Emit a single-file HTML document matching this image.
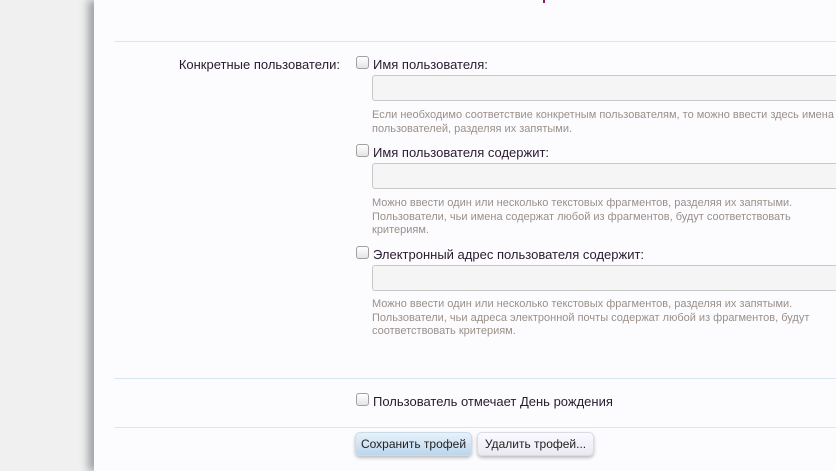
<!DOCTYPE html>
<html><head><meta charset="utf-8"><style>
body{margin:0;width:836px;height:471px;overflow:hidden;background:#f0f0f0;font-family:"Liberation Sans",sans-serif;position:relative}
#panel{position:absolute;left:94px;top:0;width:742px;height:471px;background:#fcfcff;box-shadow:-6px 0 8px rgba(60,70,80,.45)}
.a{position:absolute;white-space:nowrap}
.hr{position:absolute;left:114px;width:722px;height:1px;background:#d8e6f0}
.lbl{font-size:13px;color:#2a1a30}
.cb{position:absolute;width:11px;height:11px;border:1px solid #a0a0a0;border-radius:3px;background:linear-gradient(#fff,#e4e4e4)}
.ta{position:absolute;left:372px;width:464px;height:26px;border:1px solid #c8c8c8;border-right:none;border-radius:3px 0 0 3px;background:#f5f5f5;box-sizing:border-box}
.hint{position:absolute;left:372px;font-size:11px;line-height:13.5px;color:#9a8f88;white-space:nowrap}
.btn{position:absolute;top:432px;height:24px;border-radius:5px;font-size:12px;color:#222;line-height:22px;text-align:center;box-sizing:border-box;white-space:nowrap;box-shadow:0 2px 3px rgba(0,0,0,.25)}
</style></head><body>
<div id="panel"></div>
<div class="a" style="left:543px;top:0;width:2px;height:3px;background:#802060"></div>
<div class="hr" style="top:41px"></div>
<div class="a lbl" style="right:496px;top:57px">Конкретные пользователи:</div>
<div class="cb" style="left:356px;top:56px"></div>
<div class="a lbl" style="left:373px;top:57px">Имя пользователя:</div>
<div class="ta" style="top:75px"></div>
<div class="hint" style="top:109px">Если необходимо соответствие конкретным пользователям, то можно ввести здесь имена<br>пользователей, разделяя их запятыми.</div>
<div class="cb" style="left:356px;top:144px"></div>
<div class="a lbl" style="left:373px;top:145px">Имя пользователя содержит:</div>
<div class="ta" style="top:163px"></div>
<div class="hint" style="top:197px">Можно ввести один или несколько текстовых фрагментов, разделяя их запятыми.<br>Пользователи, чьи имена содержат любой из фрагментов, будут соответствовать<br>критериям.</div>
<div class="cb" style="left:356px;top:246px"></div>
<div class="a lbl" style="left:373px;top:247px">Электронный адрес пользователя содержит:</div>
<div class="ta" style="top:265px"></div>
<div class="hint" style="top:298px">Можно ввести один или несколько текстовых фрагментов, разделяя их запятыми.<br>Пользователи, чьи адреса электронной почты содержат любой из фрагментов, будут<br>соответствовать критериям.</div>
<div class="hr" style="top:378px"></div>
<div class="cb" style="left:356px;top:393px"></div>
<div class="a lbl" style="left:373px;top:394px">Пользователь отмечает День рождения</div>
<div class="hr" style="top:427px"></div>
<div class="btn" style="left:355px;width:117px;background:linear-gradient(#e8f2fa,#bcd6ec);border:1px solid #c8dcec">Сохранить трофей</div>
<div class="btn" style="left:477px;width:117px;background:linear-gradient(#fafaff,#ebe8f2);border:1px solid #dcdae6">Удалить трофей...</div>
</body></html>
